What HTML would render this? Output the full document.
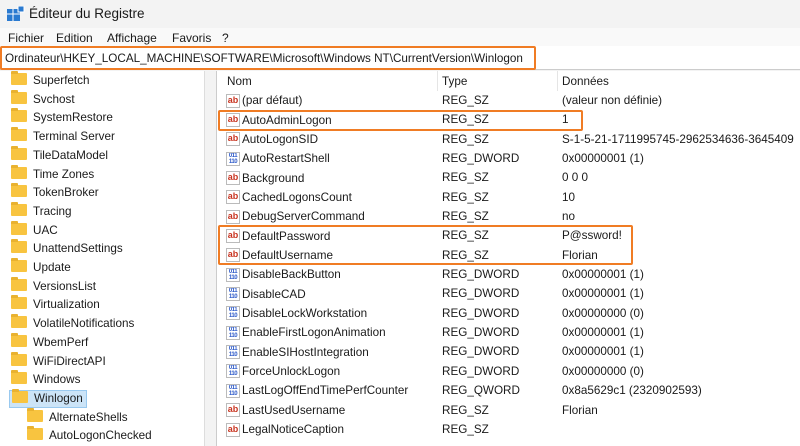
<!DOCTYPE html>
<html><head><meta charset="utf-8"><style>
*{margin:0;padding:0;box-sizing:border-box}
body{width:800px;height:446px;overflow:hidden;background:#f3f3f3;font-family:"Liberation Sans",sans-serif;font-size:11.7px;color:#1a1a1a;position:relative}
.abs{position:absolute;white-space:nowrap}
#title{top:0;left:0;width:800px;height:28px;background:#f3f3f3}
#menu{top:28px;left:0;width:800px;height:18px;background:#f9f9f9}
#addr{top:46px;left:0;width:800px;height:24px;background:#fff;border-bottom:1px solid #ccc}
#left{top:71px;left:0;width:205px;height:375px;background:#fff;border-right:1px solid #ddd}
#right{top:71px;left:216px;width:584px;height:375px;background:#fff;border-left:1px solid #ccc}
.fold{display:inline-block;width:16px;height:12px;background:#f8c440;border-radius:1px;vertical-align:-1px;margin-right:6px;position:relative}
.fold:before{content:"";position:absolute;left:0;top:-2px;width:7px;height:3px;background:#e9b230;border-radius:1px 1px 0 0}
.r{height:19.35px;display:flex;align-items:center}
.ic{flex:none;width:14px;height:14px;border:1px solid #bbb;background:#fff;color:#c8331f;font-size:9px;font-weight:bold;line-height:11px;text-align:center;margin-right:2px;overflow:hidden}
.ic.b{color:#2b58c8;font-size:6px;line-height:6px;letter-spacing:-0.5px}
.box{position:absolute;border:2px solid #f07c24;border-radius:2px}
.t{line-height:19.35px}
</style></head><body>
<div id="title" class="abs"></div>
<svg class="abs" style="left:7px;top:6px" width="18" height="16"><rect x="0" y="3" width="13" height="12" fill="#2a7ad0"/><path d="M0 8h13M6 3v12" stroke="#fff" stroke-width="1"/><rect x="11" y="0" width="6" height="6" fill="#2a7ad0" stroke="#fff"/></svg>
<div class="abs" style="left:29px;top:6px;font-size:13.5px">Éditeur du Registre</div>
<div id="menu" class="abs"></div>
<div class="abs" style="left:8px;top:31px;font-size:12px">Fichier</div>
<div class="abs" style="left:56px;top:31px;font-size:12px">Edition</div>
<div class="abs" style="left:107px;top:31px;font-size:12px">Affichage</div>
<div class="abs" style="left:172px;top:31px;font-size:12px">Favoris</div>
<div class="abs" style="left:222px;top:31px;font-size:12px">?</div>
<div id="addr" class="abs"></div>
<div class="box" style="left:0;top:46px;width:536px;height:24px"></div>
<div class="abs" style="left:5px;top:52px">Ordinateur\HKEY_LOCAL_MACHINE\SOFTWARE\Microsoft\Windows NT\CurrentVersion\Winlogon</div>
<div id="left" class="abs"></div>
<div id="right" class="abs"></div>
<div class="abs" style="left:0;top:72px;line-height:18.7px">
<div style="padding-left:11px"><span class="fold"></span>Superfetch</div>
<div style="padding-left:11px"><span class="fold"></span>Svchost</div>
<div style="padding-left:11px"><span class="fold"></span>SystemRestore</div>
<div style="padding-left:11px"><span class="fold"></span>Terminal Server</div>
<div style="padding-left:11px"><span class="fold"></span>TileDataModel</div>
<div style="padding-left:11px"><span class="fold"></span>Time Zones</div>
<div style="padding-left:11px"><span class="fold"></span>TokenBroker</div>
<div style="padding-left:11px"><span class="fold"></span>Tracing</div>
<div style="padding-left:11px"><span class="fold"></span>UAC</div>
<div style="padding-left:11px"><span class="fold"></span>UnattendSettings</div>
<div style="padding-left:11px"><span class="fold"></span>Update</div>
<div style="padding-left:11px"><span class="fold"></span>VersionsList</div>
<div style="padding-left:11px"><span class="fold"></span>Virtualization</div>
<div style="padding-left:11px"><span class="fold"></span>VolatileNotifications</div>
<div style="padding-left:11px"><span class="fold"></span>WbemPerf</div>
<div style="padding-left:11px"><span class="fold"></span>WiFiDirectAPI</div>
<div style="padding-left:11px"><span class="fold"></span>Windows</div>
<div style="padding-left:9px"><span style="display:inline-block;background:#cce4f7;border:1px solid #99c9ef;padding:0 3px 0 2px;line-height:16px"><span class="fold"></span>Winlogon</span></div>
<div style="padding-left:27px"><span class="fold"></span>AlternateShells</div>
<div style="padding-left:27px"><span class="fold"></span>AutoLogonChecked</div>
</div>
<div class="abs" style="left:437px;top:71px;width:1px;height:20px;background:#e5e5e5"></div>
<div class="abs" style="left:557px;top:71px;width:1px;height:20px;background:#e5e5e5"></div>
<div class="abs" style="left:227px;top:75px">Nom</div>
<div class="abs" style="left:442px;top:75px">Type</div>
<div class="abs" style="left:562px;top:75px">Données</div>
<div class="abs" style="left:226px;top:91px">
<div class="r"><span class="ic">ab</span>(par défaut)</div>
<div class="r"><span class="ic">ab</span>AutoAdminLogon</div>
<div class="r"><span class="ic">ab</span>AutoLogonSID</div>
<div class="r"><span class="ic b">011<br>110</span>AutoRestartShell</div>
<div class="r"><span class="ic">ab</span>Background</div>
<div class="r"><span class="ic">ab</span>CachedLogonsCount</div>
<div class="r"><span class="ic">ab</span>DebugServerCommand</div>
<div class="r"><span class="ic">ab</span>DefaultPassword</div>
<div class="r"><span class="ic">ab</span>DefaultUsername</div>
<div class="r"><span class="ic b">011<br>110</span>DisableBackButton</div>
<div class="r"><span class="ic b">011<br>110</span>DisableCAD</div>
<div class="r"><span class="ic b">011<br>110</span>DisableLockWorkstation</div>
<div class="r"><span class="ic b">011<br>110</span>EnableFirstLogonAnimation</div>
<div class="r"><span class="ic b">011<br>110</span>EnableSIHostIntegration</div>
<div class="r"><span class="ic b">011<br>110</span>ForceUnlockLogon</div>
<div class="r"><span class="ic b">011<br>110</span>LastLogOffEndTimePerfCounter</div>
<div class="r"><span class="ic">ab</span>LastUsedUsername</div>
<div class="r"><span class="ic">ab</span>LegalNoticeCaption</div>
</div>
<div class="abs t" style="left:442px;top:91px">
<div>REG_SZ</div><div>REG_SZ</div><div>REG_SZ</div><div>REG_DWORD</div><div>REG_SZ</div><div>REG_SZ</div><div>REG_SZ</div><div>REG_SZ</div><div>REG_SZ</div><div>REG_DWORD</div><div>REG_DWORD</div><div>REG_DWORD</div><div>REG_DWORD</div><div>REG_DWORD</div><div>REG_DWORD</div><div>REG_QWORD</div><div>REG_SZ</div><div>REG_SZ</div>
</div>
<div class="abs t" style="left:562px;top:91px">
<div>(valeur non définie)</div><div>1</div><div>S-1-5-21-1711995745-2962534636-3645409</div><div>0x00000001 (1)</div><div>0 0 0</div><div>10</div><div>no</div><div>P@ssword!</div><div>Florian</div><div>0x00000001 (1)</div><div>0x00000001 (1)</div><div>0x00000000 (0)</div><div>0x00000001 (1)</div><div>0x00000001 (1)</div><div>0x00000000 (0)</div><div>0x8a5629c1 (2320902593)</div><div>Florian</div><div></div>
</div>
<div class="box" style="left:218px;top:110px;width:365px;height:21px"></div>
<div class="box" style="left:218px;top:225px;width:415px;height:40px"></div>
</body></html>
